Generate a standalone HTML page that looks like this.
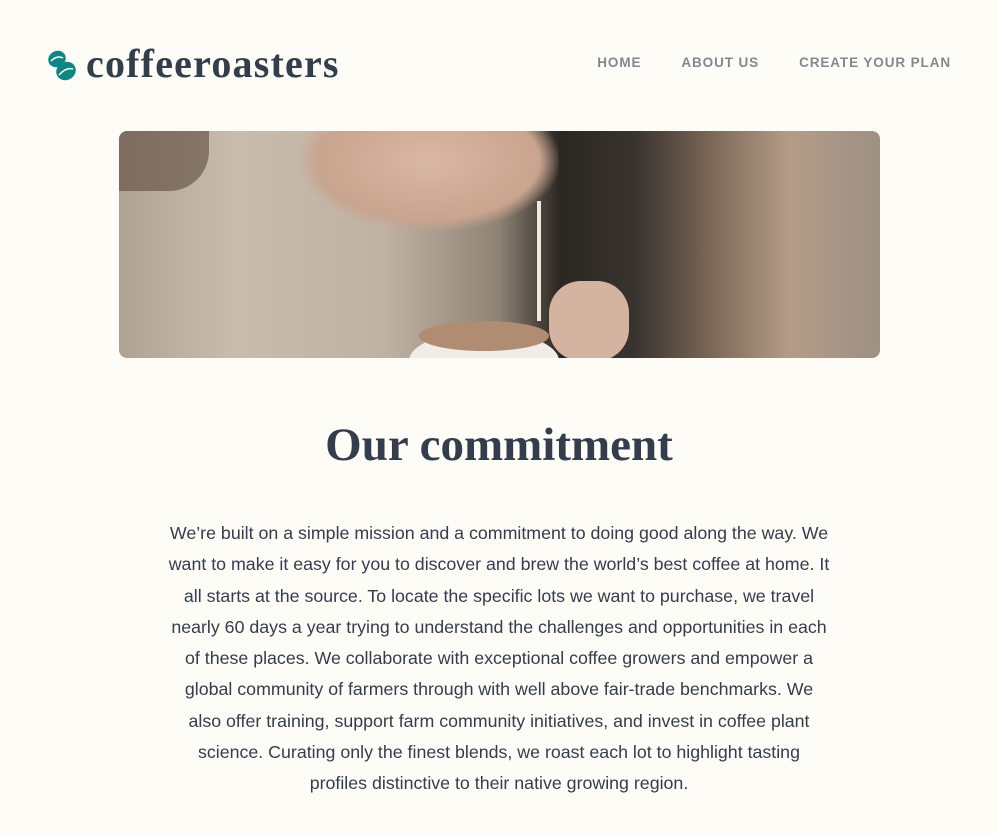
<!DOCTYPE html>
<html><head><meta charset="utf-8"><style>
body{margin:0;background:#fefcf7;width:998px;height:834px;overflow:hidden;font-family:"Liberation Sans",sans-serif;position:relative}
.logo{position:absolute;left:47px;top:44px;display:flex;align-items:center}
.logo span{font-family:"Liberation Serif",serif;font-weight:900;font-size:40px;color:#333d4b;letter-spacing:1.2px;margin-left:8px;margin-top:-4px}
nav{position:absolute;top:55px;right:47px;font-size:13.5px;font-weight:bold;color:#83888f;letter-spacing:0.9px}
nav a{margin-left:40px}
.hero{position:absolute;left:119px;top:131px;width:761px;height:227px;border-radius:8px;overflow:hidden;
background:linear-gradient(90deg,#b0a293 0%,#c8bcae 15%,#bfb2a3 35%,#8f8275 50%,#2a2622 58%,#3a3430 68%,#7c6858 78%,#b39d88 88%,#9e9084 100%)}
h1{position:absolute;top:418px;left:0;width:998px;text-align:center;margin:0;font-family:"Liberation Serif",serif;font-weight:900;font-size:47px;color:#333d4b}
p{position:absolute;top:518px;left:100px;width:798px;margin:0;text-align:center;font-size:17.8px;line-height:31.3px;color:#333d4b;white-space:nowrap}
</style></head><body>
<div class="logo"><svg width="31" height="33" viewBox="0 0 31 33"><ellipse cx="10" cy="10" rx="9" ry="8" transform="rotate(-30 10 10)" fill="#0e8784"/><ellipse cx="19" cy="22" rx="10" ry="9" transform="rotate(-30 19 22)" fill="#0e8784"/><path d="M4 12 Q10 6 16 9" stroke="#fefcf7" stroke-width="1.5" fill="none"/><path d="M12 26 Q19 18 26 20" stroke="#fefcf7" stroke-width="1.5" fill="none"/></svg><span>coffeeroasters</span></div>
<nav><a>HOME</a><a>ABOUT US</a><a>CREATE YOUR PLAN</a></nav>
<div class="hero">
<div style="position:absolute;left:180px;top:0;width:260px;height:100px;background:radial-gradient(ellipse at 50% 30%,#d9b8a4,#c9a48e 60%,transparent 72%)"></div>
<div style="position:absolute;left:0;top:0;width:90px;height:60px;background:#5b4a40;opacity:.6;border-radius:0 0 40px 0"></div>
<div style="position:absolute;left:290px;top:200px;width:150px;height:60px;border-radius:50%;background:#f1ece6"></div>
<div style="position:absolute;left:300px;top:190px;width:130px;height:30px;border-radius:50%;background:#b08c72"></div>
<div style="position:absolute;left:430px;top:150px;width:80px;height:80px;border-radius:40%;background:#d4b3a1"></div>
<div style="position:absolute;left:418px;top:70px;width:4px;height:120px;background:#eee9e2"></div>
</div>
<h1>Our commitment</h1>
<p>We’re built on a simple mission and a commitment to doing good along the way. We<br>want to make it easy for you to discover and brew the world’s best coffee at home. It<br>all starts at the source. To locate the specific lots we want to purchase, we travel<br>nearly 60 days a year trying to understand the challenges and opportunities in each<br>of these places. We collaborate with exceptional coffee growers and empower a<br>global community of farmers through with well above fair-trade benchmarks. We<br>also offer training, support farm community initiatives, and invest in coffee plant<br>science. Curating only the finest blends, we roast each lot to highlight tasting<br>profiles distinctive to their native growing region.</p>
</body></html>
